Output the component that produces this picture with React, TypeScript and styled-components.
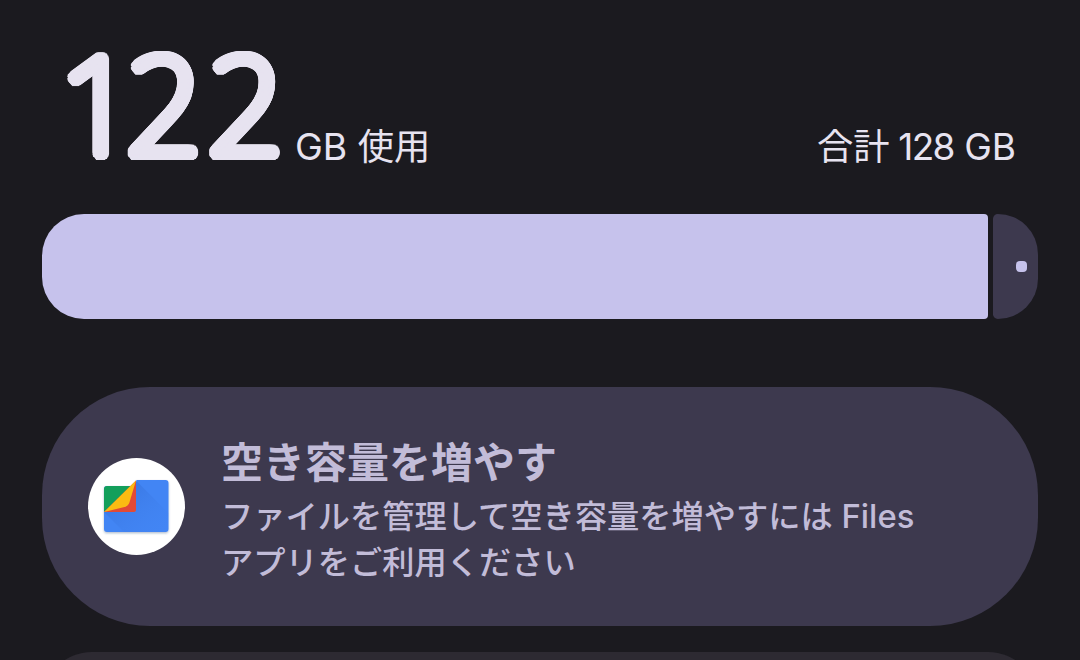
import styled, { createGlobalStyle } from 'styled-components';

const GlobalStyle = createGlobalStyle`
  * {
    box-sizing: border-box;
  }
  body {
    margin: 0;
    background: #1b1a1f;
    font-family: Inter, 'Noto Sans CJK JP', sans-serif;
  }
`;

// Rings of shadows thicken a hairline glyph and leave its ends round.
const roundStroke = (radius: number, color: string) => {
  const shadows: string[] = [];
  for (let r = radius; r > 0; r -= 2) {
    const steps = Math.ceil(r * 6);
    for (let i = 0; i < steps; i += 1) {
      const a = (i / steps) * Math.PI * 2;
      shadows.push(`${(Math.cos(a) * r).toFixed(2)}px ${(Math.sin(a) * r).toFixed(2)}px 0.6px ${color}`);
    }
  }
  return shadows.join(', ');
};

const Screen = styled.main`
  width: 1080px;
  height: 660px;
  overflow: hidden;
  padding: 0 42px;
  display: flex;
  flex-direction: column;
  background: #1b1a1f;
`;
const Summary = styled.header`
  height: 214px;
  flex: none;
  padding: 0 22px 42px 18px;
  display: flex;
  align-items: flex-end;
  color: #e7e3f0;
  white-space: nowrap;
`;
const UsedAmount = styled.span`
  width: 235px;
  margin-bottom: -8px;
  font-family: 'Noto Sans', sans-serif;
  font-size: 133px;
  font-weight: 100;
  line-height: 154px;
  letter-spacing: 5.7px;
  text-shadow: ${roundStroke(6.4, '#e7e3f0')};
`;
const TightDigit = styled.span`
  letter-spacing: -9.5px;
`;
const Unit = styled.span<{ $end?: boolean }>`
  font-size: 36.3px;
  line-height: 50px;
  font-weight: 400;
  margin-left: ${({ $end }) => ($end ? 'auto' : '0')};
`;
const Latin = styled.span<{ $size: number; $spacing?: number }>`
  font-size: ${({ $size }) => $size}px;
  letter-spacing: ${({ $spacing = 0 }) => $spacing}px;
`;
const Meter = styled.div`
  height: 105px;
  flex: none;
  display: flex;
  gap: 5px;
`;
const MeterUsed = styled.div`
  flex: 1;
  background: #c6c2ec;
  border-radius: 42px 4px 4px 42px;
`;
const MeterFree = styled.div`
  width: 45px;
  display: flex;
  align-items: center;
  justify-content: flex-end;
  padding-right: 11px;
  background: #3d394e;
  border-radius: 5px 42px 42px 5px;
`;
const MeterDot = styled.div`
  width: 11px;
  height: 11px;
  border-radius: 4px;
  background: #c6c2ec;
`;
const Card = styled.section`
  height: 239px;
  flex: none;
  margin-top: 68px;
  padding: 0 46px;
  display: flex;
  align-items: center;
  gap: 36px;
  border-radius: 108px;
  background: #3d394e;
  color: #c2bcd8;
`;
const AppIcon = styled.div`
  width: 97px;
  height: 97px;
  flex: none;
  border-radius: 50%;
  overflow: hidden;
  background: #fff;
`;
const CardText = styled.div`
  padding-top: 6px;
  display: flex;
  flex-direction: column;
  white-space: nowrap;
`;
const CardTitle = styled.h2`
  margin: 0;
  font-size: 42px;
  line-height: 60px;
  font-weight: 700;
`;
const CardBody = styled.p`
  margin: 0;
  font-size: 32.25px;
  line-height: 46px;
  font-weight: 500;
`;
const NextCard = styled.section`
  height: 120px;
  flex: none;
  margin-top: 26px;
  border-radius: 50px;
  background: #2d2a32;
`;

const FilesIcon = () => (
  <svg width="97" height="97" viewBox="88 458 97 97">
    <defs>
      <linearGradient id="fold" x1="0" y1="0" x2="1" y2="1">
        <stop offset="0" stopColor="#2f66cb" stopOpacity=".65" />
        <stop offset="1" stopColor="#4285f4" stopOpacity="0" />
      </linearGradient>
      <filter id="lift" x="-20%" y="-20%" width="140%" height="150%">
        <feDropShadow dx="0" dy="1.2" stdDeviation="1.2" floodColor="#1b3a70" floodOpacity=".35" />
      </filter>
    </defs>
    <g filter="url(#lift)">
      <path d="M107 486h29v-3.500l.5-2.500H165.500a3 3 0 0 1 3 3v46a3 3 0 0 1-3 3H107a3 3 0 0 1-3-3V489a3 3 0 0 1 3-3Z" fill="#4285f4" />
    </g>
    <path d="M136 480.500L168.500 513v16a3 3 0 0 1-3 3H124L104 512h32Z" fill="url(#fold)" />
    <path d="M107 486h25l-28 26V489a3 3 0 0 1 3-3Z" fill="#139f5b" />
    <path d="M136 480.500V510a2 2 0 0 1-2 2h-30Z" fill="#e14a36" />
    <path d="M136 480.500L104 512l20.500-5c2.600-.7 4.200-2.300 5-4.800Z" fill="#fbbc12" />
  </svg>
);

const App = () => (
  <>
    <GlobalStyle />
    <Screen lang="ja">
      <Summary>
        <UsedAmount>
          <TightDigit>1</TightDigit>
          22
        </UsedAmount>
        <Unit>
          <Latin $size={37.3}>GB </Latin>
          使用
        </Unit>
        <Unit $end>
          合計
          <Latin $size={37} $spacing={-1.7}> 128</Latin>
          <Latin $size={37}> GB</Latin>
        </Unit>
      </Summary>
      <Meter>
        <MeterUsed />
        <MeterFree>
          <MeterDot />
        </MeterFree>
      </Meter>
      <Card>
        <AppIcon>
          <FilesIcon />
        </AppIcon>
        <CardText>
          <CardTitle>空き容量を増やす</CardTitle>
          <CardBody>
            ファイルを管理して空き容量を増やすには
            <Latin $size={32.8}> Files</Latin>
            <br />
            アプリをご利用ください
          </CardBody>
        </CardText>
      </Card>
      <NextCard />
    </Screen>
  </>
);

export default App;
